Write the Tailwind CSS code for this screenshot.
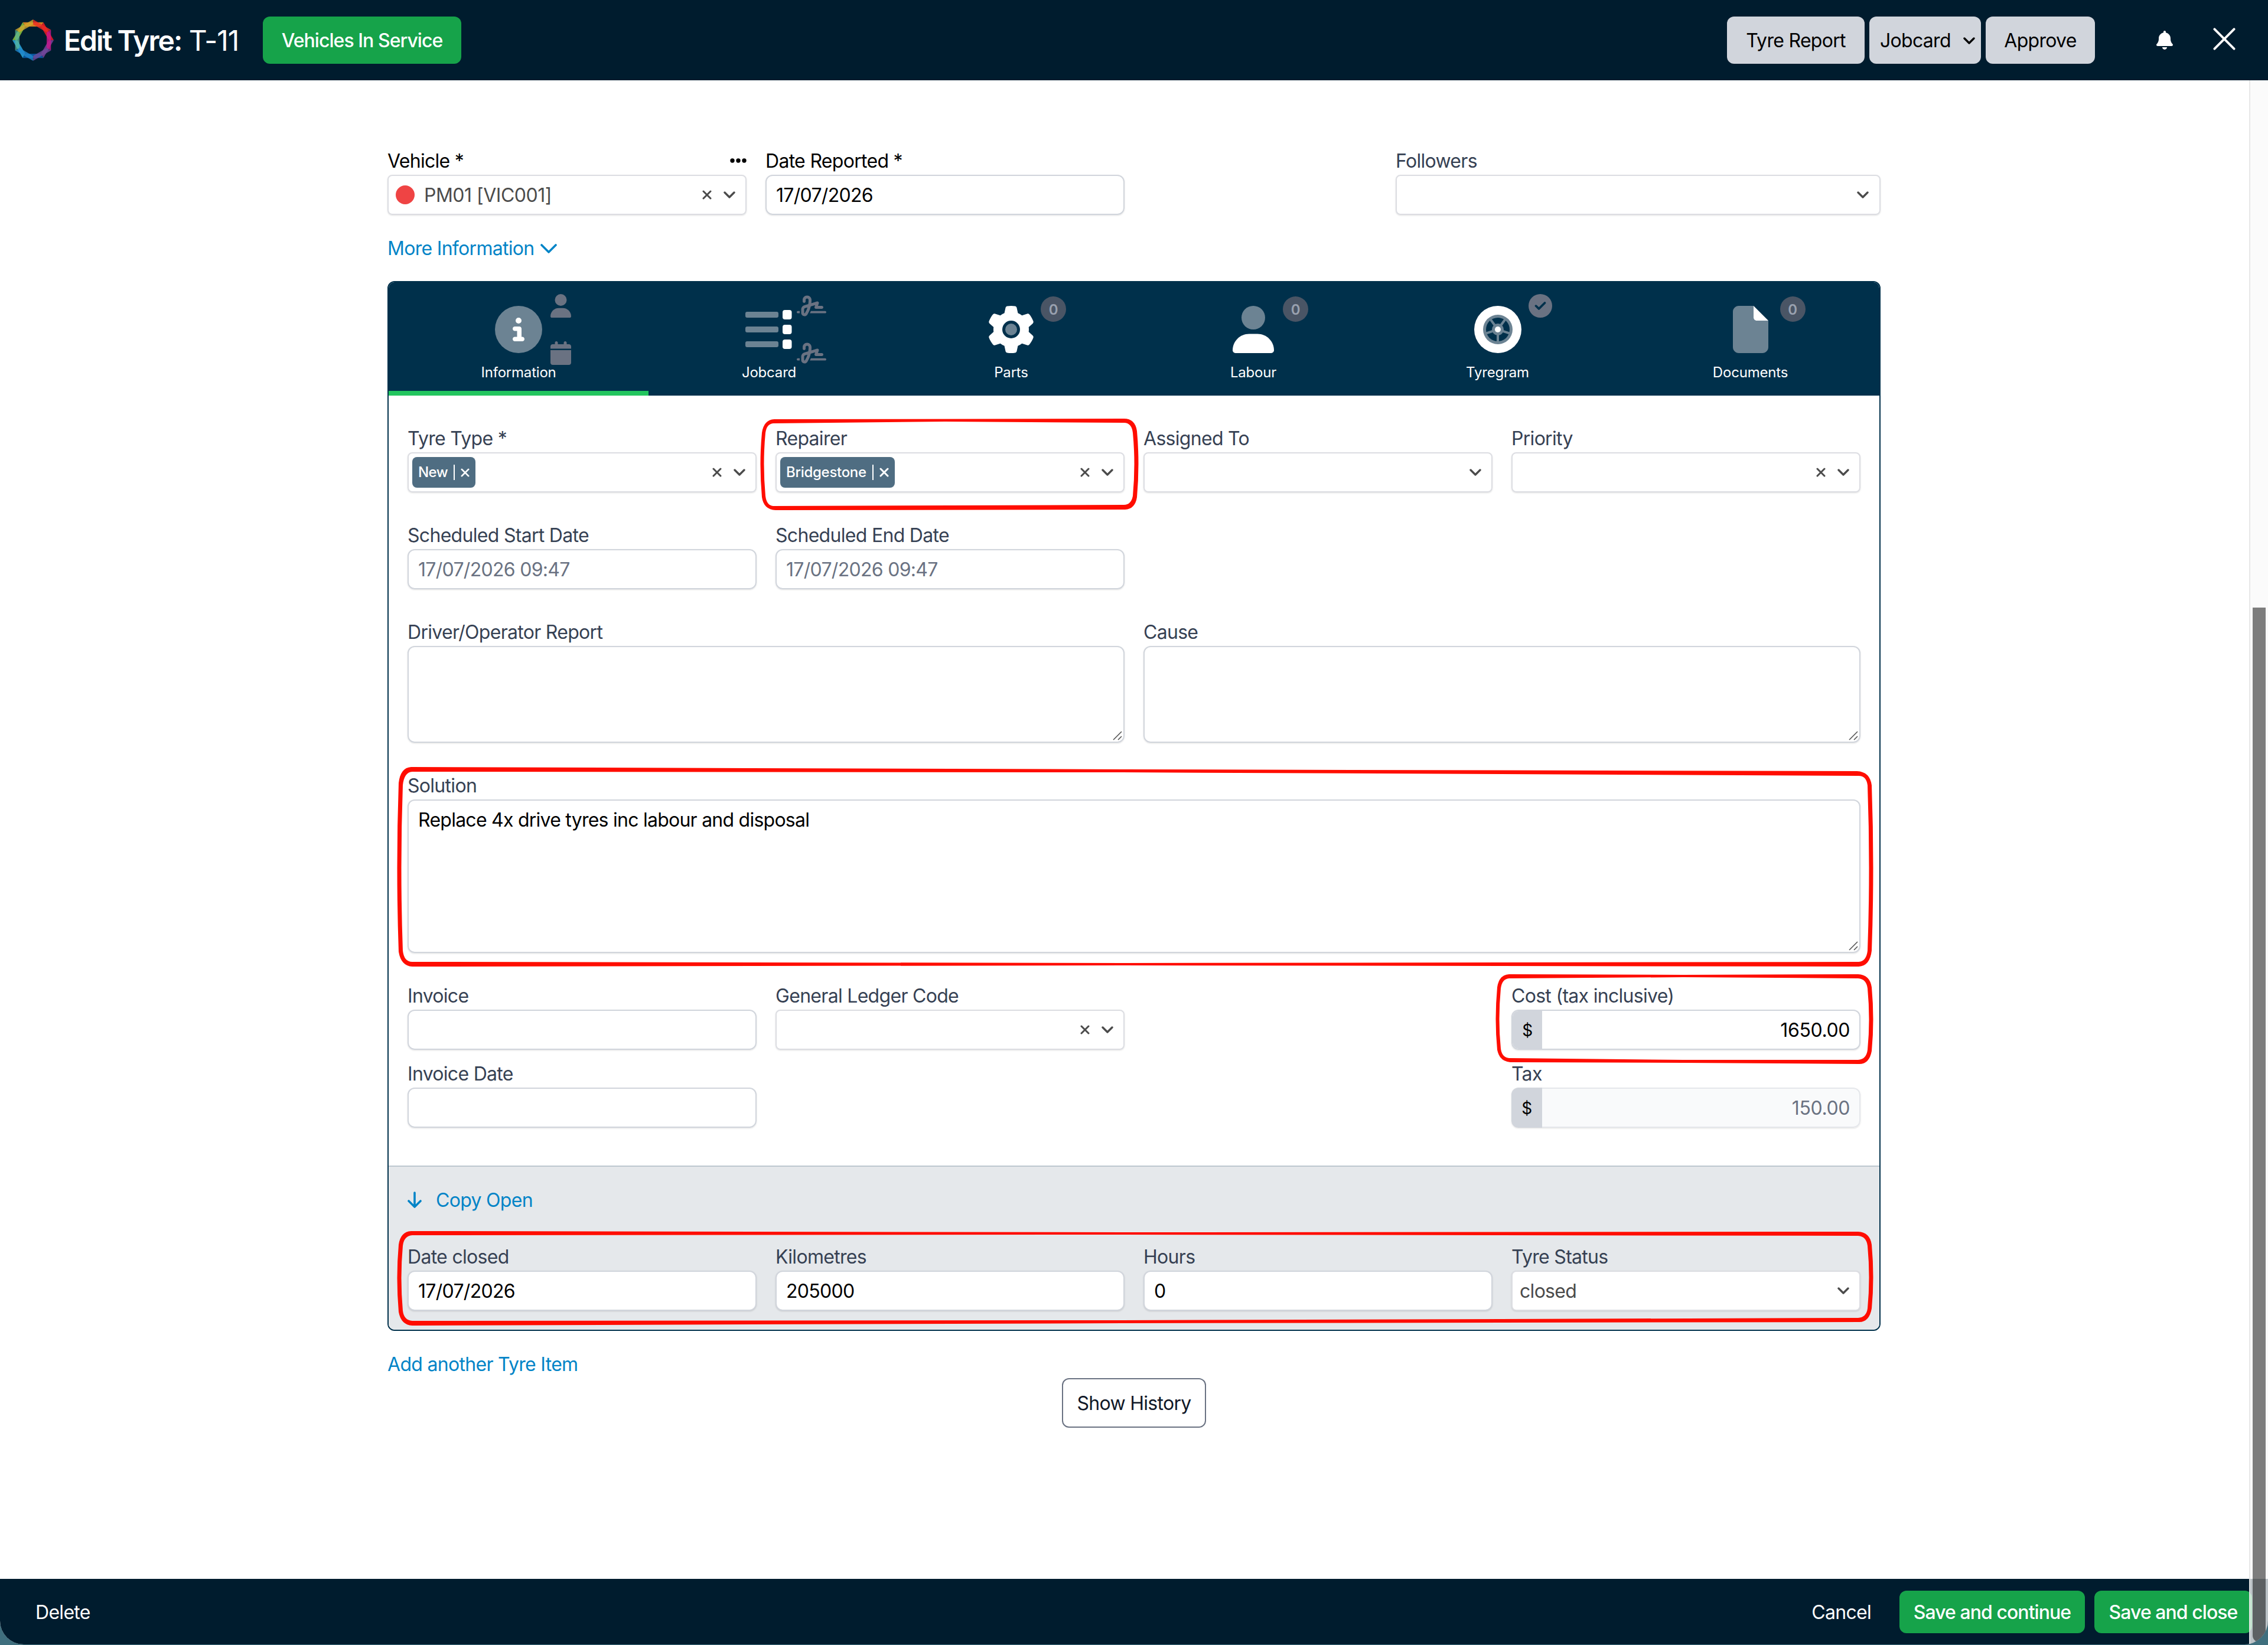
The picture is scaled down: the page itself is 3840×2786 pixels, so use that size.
<!DOCTYPE html>
<html lang="en">
<head>
    <meta charset="UTF-8">
    <meta name="viewport" content="width=device-width, initial-scale=1.0">
    <title>Edit Tyre: T-11</title>
    <script src="https://cdn.jsdelivr.net/npm/@tailwindcss/browser@4"></script>
</head>
<body class="bg-[#3f6f7e]">
    <!-- Shared icons -->
    <svg class="hidden">
        <symbol id="caret" viewBox="0 0 20 12"><path d="M2 2l8 8 8-8" fill="none" stroke="currentColor" stroke-width="3.4" stroke-linecap="round" stroke-linejoin="round"/></symbol>
        <symbol id="cross" viewBox="0 0 16 16"><path d="M2 2l12 12M14 2L2 14" fill="none" stroke="currentColor" stroke-width="3" stroke-linecap="round"/></symbol>
        <symbol id="grip" viewBox="0 0 16 16"><path d="M1 15L15 1M9 15l6-6" fill="none" stroke="#555" stroke-width="1.6"/></symbol>
        <symbol id="user" viewBox="0 0 448 512"><path d="M224 256A128 128 0 1 0 224 0a128 128 0 1 0 0 256z"/><path d="M178.3 304C79.8 304 0 383.8 0 482.3C0 498.7 13.3 512 29.7 512H418.3c16.4 0 29.7-13.3 29.7-29.7C448 383.8 368.2 304 269.7 304H178.3z"/></symbol>
        <symbol id="sign" viewBox="0 0 640 512"><path d="M192 128c0-17.7 14.3-32 32-32s32 14.3 32 32v7.8c0 27.7-2.4 55.3-7.1 82.5l-84.4 25.3c-40.6 12.2-68.4 49.6-68.4 92v71.9c0 40 32.5 72.5 72.5 72.5c26 0 50-13.9 62.9-36.5l13.9-24.3c26.8-47 46.5-97.7 58.4-150.5l94.4-28.3-12.5 37.5c-3.3 9.8-1.6 20.5 4.4 28.8s15.7 13.3 26 13.3H544c17.7 0 32-14.3 32-32s-14.3-32-32-32H460.4l18-53.9c3.8-11.3 .9-23.8-7.4-32.4s-20.7-11.8-32.2-8.4L316.4 198.1c2.4-20.7 3.6-41.4 3.6-62.3V128c0-53-43-96-96-96s-96 43-96 96v32c0 17.7 14.3 32 32 32s32-14.3 32-32V128zm-9.2 177l49-14.7c-10.4 33.8-24.5 66.4-42.1 97.2l-13.9 24.3c-1.5 2.6-4.3 4.3-7.4 4.3c-4.7 0-8.5-3.8-8.5-8.5V335.6c0-14.1 9.3-26.6 22.8-30.7zM24 368c-13.3 0-24 10.7-24 24s10.7 24 24 24H64.3c-.2-2.8-.3-5.6-.3-8.5V368H24zm592 48c13.3 0 24-10.7 24-24s-10.7-24-24-24H305.9c-6.7 16.3-14.2 32.3-22.3 48H616z"/></symbol>
    </svg>

    <div class="relative flex h-[2785px] w-[3840px] flex-col overflow-hidden rounded-b-[40px] bg-white font-['Inter','Liberation_Sans',sans-serif] text-[32px] leading-[50px] tracking-[-0.7px] text-black">
        <header class="flex h-34 shrink-0 items-center bg-[#001c2e] pr-[55px] pl-5 text-white">
            <svg class="size-18" viewBox="-36 -36 72 72" fill-opacity=".85">
                <polygon points="-17.5,-30.3 17.5,-30.3 13,-23 -13,-23" fill="#f7941d"/>
                <polygon points="-17.5,-30.3 17.5,-30.3 13,-23 -13,-23" fill="#ed1c24" transform="rotate(60)"/>
                <polygon points="-17.5,-30.3 17.5,-30.3 13,-23 -13,-23" fill="#7a3f9a" transform="rotate(120)"/>
                <polygon points="-17.5,-30.3 17.5,-30.3 13,-23 -13,-23" fill="#0a5fae" transform="rotate(180)"/>
                <polygon points="-17.5,-30.3 17.5,-30.3 13,-23 -13,-23" fill="#29a8e0" transform="rotate(240)"/>
                <polygon points="-17.5,-30.3 17.5,-30.3 13,-23 -13,-23" fill="#8cc63f" transform="rotate(300)"/>
                <polygon points="-17.5,-30.3 17.5,-30.3 13,-23 -13,-23" fill="#ee2a24" fill-opacity=".8" transform="rotate(30)"/>
                <polygon points="-17.5,-30.3 17.5,-30.3 13,-23 -13,-23" fill="#c9168c" fill-opacity=".8" transform="rotate(90)"/>
                <polygon points="-17.5,-30.3 17.5,-30.3 13,-23 -13,-23" fill="#6f4a9c" fill-opacity=".8" transform="rotate(150)"/>
                <polygon points="-17.5,-30.3 17.5,-30.3 13,-23 -13,-23" fill="#1f86cc" fill-opacity=".8" transform="rotate(210)"/>
                <polygon points="-17.5,-30.3 17.5,-30.3 13,-23 -13,-23" fill="#5bb89a" fill-opacity=".7" transform="rotate(270)"/>
                <polygon points="-17.5,-30.3 17.5,-30.3 13,-23 -13,-23" fill="#d0a630" fill-opacity=".8" transform="rotate(330)"/>
            </svg>
            <h1 class="ml-4 w-[337px] pt-0.5 text-[48px] tracking-[-1px] whitespace-nowrap"><span class="font-semibold tracking-[-2px]">Edit Tyre:</span> T-11</h1>
            <button class="flex h-20 w-[336px] items-center justify-center rounded-xl bg-[#16a34a] pt-0.5 font-medium tracking-[-0.95px]">Vehicles In Service</button>
            <div class="ml-auto flex gap-2 text-black">
                <button class="h-20 w-[233px] rounded-xl bg-gray-300 pt-0.5">Tyre Report</button>
                <button class="flex h-20 w-[189px] items-center justify-between rounded-xl bg-gray-300 pt-0.5 pr-2.5 pl-4.5">Jobcard <svg class="h-3 w-5"><use href="#caret"/></svg></button>
                <button class="h-20 w-[185px] rounded-xl bg-gray-300 pt-0.5">Approve</button>
            </div>
            <svg class="ml-26 h-8 w-7" viewBox="0 0 448 512" fill="#fff"><path d="M224 0c-17.7 0-32 14.3-32 32V51.2C119 66 64 130.6 64 208v18.8c0 47-17.3 92.4-48.5 127.6l-7.4 8.3c-8.4 9.4-10.4 22.9-5.3 34.4S19.4 416 32 416H416c12.6 0 24-7.4 29.2-18.9s3.1-25-5.3-34.4l-7.4-8.3C401.3 319.2 384 273.9 384 226.8V208c0-77.4-55-142-128-156.8V32c0-17.7-14.3-32-32-32zm45.3 493.3c12-12 18.7-28.3 18.7-45.3H224 160c0 17 6.7 33.3 18.7 45.3s28.3 18.7 45.3 18.7s33.3-6.7 45.3-18.7z"/></svg>
            <svg class="mb-1 ml-17 size-[38px]" viewBox="0 0 39 39" fill="none" stroke="#fff" stroke-width="4" stroke-linecap="round"><path d="M2.5 2.5l34 34M36.5 2.5l-34 34"/></svg>
        </header>

        <main class="flex-1 px-[656px] pt-28">
            <div class="flex gap-8">
                <div class="w-[608px]">
                    <div class="flex h-12 items-center justify-between"><span class="pt-0.5">Vehicle *</span>
                        <svg class="h-2 w-7" viewBox="0 0 28 8"><circle cx="4" cy="4" r="3.7"/><circle cx="14" cy="4" r="3.7"/><circle cx="24" cy="4" r="3.7"/></svg>
                    </div>
                    <div class="flex h-17 items-center rounded-lg border-2 border-[#dcdde2] px-3 text-[#4b4b4b] shadow-sm">
                        <span class="mr-4 size-8 rounded-full bg-[#ef4444]"></span><span class="pt-0.5 tracking-[-0.5px]">PM01 [VIC001]</span>
                        <svg class="mr-5 ml-auto size-4"><use href="#cross"/></svg>
                        <svg class="mr-[5px] h-3 w-5"><use href="#caret"/></svg>
                    </div>
                </div>
                <div class="w-[608px]">
                    <div class="h-12">Date Reported *</div>
                    <div class="flex h-17 items-center rounded-xl border-2 border-gray-300 px-4 pt-0.5 shadow-sm">17/07/2026</div>
                </div>
                <div class="ml-auto w-[821px]">
                    <div class="h-12 text-gray-700">Followers</div>
                    <div class="flex h-17 items-center justify-end rounded-lg border-2 border-[#dcdde2] px-4.5 text-[#4b4b4b] shadow-sm"><svg class="h-3 w-5"><use href="#caret"/></svg></div>
                </div>
            </div>
            <a class="mt-[33px] mb-[31px] flex h-12 items-center gap-2.5 text-[#0284c7]">More Information <svg class="h-4 w-7" viewBox="0 0 28 16" fill="none" stroke="currentColor" stroke-width="3.6" stroke-linecap="round" stroke-linejoin="round"><path d="M2 2l12 12L26 2"/></svg></a>

            <section class="overflow-hidden rounded-xl border-2 border-[#00304b]">
                <nav class="flex h-48 bg-[#00304b] text-[24px] leading-[34px] tracking-[-0.2px] text-white">
                    <div class="flex w-[440px] flex-col items-center border-b-8 border-[#22c55e] pt-10">
                        <div class="relative h-24">
                            <svg class="size-20" viewBox="0 0 512 512"><circle cx="256" cy="256" r="256" fill="#6c8393"/><path fill="#fff" d="M216 336h24V272H216c-13.3 0-24-10.7-24-24s10.7-24 24-24h48c13.3 0 24 10.7 24 24v88h8c13.3 0 24 10.7 24 24s-10.7 24-24 24H216c-13.3 0-24-10.7-24-24s10.7-24 24-24zm40-208a32 32 0 1 1 0 64 32 32 0 1 1 0-64z"/></svg>
                            <svg class="absolute -top-5 left-[94px] h-10 w-[35px] fill-gray-500"><use href="#user"/></svg>
                            <svg class="absolute top-15 left-[94px] h-10 w-[35px] fill-gray-500" viewBox="0 0 448 512"><path d="M96 32V64H48C21.5 64 0 85.5 0 112v48H448V112c0-26.5-21.5-48-48-48H352V32c0-17.7-14.3-32-32-32s-32 14.3-32 32V64H160V32c0-17.7-14.3-32-32-32S96 14.3 96 32zM448 192H0V464c0 26.5 21.5 48 48 48H400c26.5 0 48-21.5 48-48V192z"/></svg>
                        </div>
                        Information
                    </div>
                    <div class="flex w-[408px] flex-col items-center pt-10">
                        <div class="relative h-24">
                            <svg class="size-20" viewBox="0 0 80 80"><path fill="#6c8393" d="M3 10h50a3 3 0 0 1 3 3v4a3 3 0 0 1-3 3H3a3 3 0 0 1-3-3v-4a3 3 0 0 1 3-3zm0 25h50a3 3 0 0 1 3 3v4a3 3 0 0 1-3 3H3a3 3 0 0 1-3-3v-4a3 3 0 0 1 3-3zm0 25h50a3 3 0 0 1 3 3v4a3 3 0 0 1-3 3H3a3 3 0 0 1-3-3v-4a3 3 0 0 1 3-3z"/><g fill="#fff"><rect x="63" y="7" width="15.5" height="16" rx="4"/><rect x="63" y="32" width="15.5" height="16" rx="4"/><rect x="63" y="57" width="15.5" height="16" rx="4"/></g></svg>
                            <svg class="absolute -top-5 left-[87px] h-10 w-[50px] fill-gray-500"><use href="#sign"/></svg>
                            <svg class="absolute top-15 left-[87px] h-10 w-[50px] fill-gray-500"><use href="#sign"/></svg>
                        </div>
                        Jobcard
                    </div>
                    <div class="flex w-[412px] flex-col items-center pt-10">
                        <div class="relative h-24">
                            <svg class="size-20" viewBox="0 0 512 512"><path fill="#fff" d="M495.9 166.6c3.2 8.7 .5 18.4-6.4 24.6l-43.3 39.4c1.1 8.3 1.7 16.8 1.7 25.4s-.6 17.1-1.7 25.4l43.3 39.4c6.9 6.2 9.6 15.9 6.4 24.6c-4.4 11.9-9.7 23.3-15.8 34.3l-4.7 8.1c-6.6 11-14 21.4-22.1 31.2c-5.9 7.2-15.7 9.6-24.5 6.8l-55.7-17.7c-13.4 10.3-28.2 18.9-44 25.4l-12.5 57.1c-2 9.1-9 16.3-18.2 17.8c-13.8 2.3-28 3.5-42.5 3.5s-28.7-1.2-42.5-3.5c-9.2-1.5-16.2-8.7-18.2-17.8l-12.5-57.1c-15.8-6.5-30.6-15.1-44-25.4L83.1 425.9c-8.8 2.8-18.6 .3-24.5-6.8c-8.1-9.8-15.5-20.2-22.1-31.2l-4.7-8.1c-6.1-11-11.4-22.4-15.8-34.3c-3.2-8.7-.5-18.4 6.4-24.6l43.3-39.4C64.6 273.1 64 264.6 64 256s.6-17.1 1.7-25.4L22.4 191.2c-6.9-6.2-9.6-15.9-6.4-24.6c4.4-11.9 9.7-23.3 15.8-34.3l4.7-8.1c6.6-11 14-21.4 22.1-31.2c5.9-7.2 15.7-9.6 24.5-6.8l55.7 17.7c13.4-10.3 28.2-18.9 44-25.4l12.5-57.1c2-9.1 9-16.3 18.2-17.8C227.3 1.2 241.5 0 256 0s28.7 1.2 42.5 3.5c9.2 1.5 16.2 8.7 18.2 17.8l12.5 57.1c15.8 6.5 30.6 15.1 44 25.4l55.7-17.7c8.8-2.8 18.6-.3 24.5 6.8c8.1 9.8 15.5 20.2 22.1 31.2l4.7 8.1c6.1 11 11.4 22.4 15.8 34.3z"/><circle cx="256" cy="256" r="96" fill="#00304b"/><circle cx="256" cy="256" r="64" fill="#6c8393"/></svg>
                            <span class="absolute -top-4 left-[90px] flex size-[43px] items-center justify-center rounded-full bg-gray-600 pt-0.5 font-semibold text-gray-400">0</span>
                        </div>
                        Parts
                    </div>
                    <div class="flex w-[408px] flex-col items-center pt-10">
                        <div class="relative h-24">
                            <svg class="h-20 w-[70px]" viewBox="0 0 448 512"><circle cx="224" cy="128" r="128" fill="#6c8393"/><path fill="#fff" d="M178.3 304C79.8 304 0 383.8 0 482.3C0 498.7 13.3 512 29.7 512H418.3c16.4 0 29.7-13.3 29.7-29.7C448 383.8 368.2 304 269.7 304H178.3z"/></svg>
                            <span class="absolute -top-4 left-[85px] flex size-[43px] items-center justify-center rounded-full bg-gray-600 pt-0.5 font-semibold text-gray-400">0</span>
                        </div>
                        Labour
                    </div>
                    <div class="flex w-[419px] flex-col items-center pt-10">
                        <div class="relative h-24">
                            <svg class="size-20" viewBox="-40 -40 80 80">
                                <circle r="40" fill="#fff"/><circle r="25" fill="#6c8393"/><circle r="20" fill="#00304b"/>
                                <g stroke="#6c8393" stroke-width="4"><path d="M0 0v22"/><path d="M0 0v22" transform="rotate(72)"/><path d="M0 0v22" transform="rotate(144)"/><path d="M0 0v22" transform="rotate(216)"/><path d="M0 0v22" transform="rotate(288)"/></g>
                                <circle r="10" fill="#6c8393"/><circle r="5" fill="#fff"/>
                            </svg>
                            <svg class="absolute -top-5 left-[92px] size-10 fill-gray-500" viewBox="0 0 512 512"><path d="M256 512A256 256 0 1 0 256 0a256 256 0 1 0 0 512zM369 209L241 337c-9.4 9.4-24.6 9.4-33.9 0l-64-64c-9.4-9.4-9.4-24.6 0-33.9s24.6-9.4 33.9 0l47 47L335 175c9.4-9.4 24.6-9.4 33.9 0s9.4 24.6 0 33.9z"/></svg>
                        </div>
                        Tyregram
                    </div>
                    <div class="flex w-[437px] flex-col items-center pt-10">
                        <div class="relative h-24">
                            <svg class="h-20 w-15" viewBox="0 0 384 512"><path fill="#6c8393" d="M0 64C0 28.7 28.7 0 64 0H224V128c0 17.7 14.3 32 32 32H384V448c0 35.3-28.7 64-64 64H64c-35.3 0-64-28.7-64-64V64z"/><path fill="#fff" d="M384 160H256c-17.7 0-32-14.3-32-32V0L384 160z"/></svg>
                            <span class="absolute -top-4 left-20 flex size-[43px] items-center justify-center rounded-full bg-gray-600 pt-0.5 font-semibold text-gray-400">0</span>
                        </div>
                        Documents
                    </div>
                </nav>

                <div class="grid grid-cols-4 gap-x-8 gap-y-12 px-8 pt-12 pb-16 text-gray-700">
                    <div>
                        <div class="h-12">Tyre Type *</div>
                        <div class="flex h-17 items-center rounded-lg border-2 border-[#dcdde2] pr-[17px] pl-1.5 text-[#4b4b4b] shadow-sm">
                            <span class="flex h-13 items-center rounded-lg bg-[#4f6d82] px-2.5 text-[24px] font-medium tracking-[-0.6px] text-white">New<i class="mr-2.5 ml-2.5 h-6.5 w-0.5 bg-white"></i><svg class="size-[15px]"><use href="#cross"/></svg></span>
                            <svg class="mr-5 ml-auto size-4"><use href="#cross"/></svg>
                            <svg class="h-3 w-5"><use href="#caret"/></svg>
                        </div>
                    </div>
                    <div>
                        <div class="h-12">Repairer</div>
                        <div class="flex h-17 items-center rounded-lg border-2 border-[#dcdde2] pr-[17px] pl-1.5 text-[#4b4b4b] shadow-sm">
                            <span class="flex h-13 items-center rounded-lg bg-[#4f6d82] px-2.5 text-[24px] font-medium tracking-[-0.3px] text-white">Bridgestone<i class="mr-2.5 ml-2.5 h-6.5 w-0.5 bg-white"></i><svg class="size-4"><use href="#cross"/></svg></span>
                            <svg class="mr-5 ml-auto size-4"><use href="#cross"/></svg>
                            <svg class="h-3 w-5"><use href="#caret"/></svg>
                        </div>
                    </div>
                    <div>
                        <div class="h-12">Assigned To</div>
                        <div class="flex h-17 items-center justify-end rounded-lg border-2 border-[#dcdde2] px-[17px] text-[#4b4b4b] shadow-sm"><svg class="h-3 w-5"><use href="#caret"/></svg></div>
                    </div>
                    <div>
                        <div class="h-12">Priority</div>
                        <div class="flex h-17 items-center justify-end gap-5 rounded-lg border-2 border-[#dcdde2] px-[17px] text-[#4b4b4b] shadow-sm"><svg class="size-4"><use href="#cross"/></svg><svg class="h-3 w-5"><use href="#caret"/></svg></div>
                    </div>

                    <div>
                        <div class="h-12">Scheduled Start Date</div>
                        <div class="flex h-17 items-center rounded-xl border-2 border-gray-300 px-4 pt-0.5 text-gray-500 shadow-sm">17/07/2026 09:47</div>
                    </div>
                    <div class="col-span-3 w-[591px]">
                        <div class="h-12">Scheduled End Date</div>
                        <div class="flex h-17 items-center rounded-xl border-2 border-gray-300 px-4 pt-0.5 text-gray-500 shadow-sm">17/07/2026 09:47</div>
                    </div>

                    <div class="col-span-2">
                        <div class="h-12">Driver/Operator Report</div>
                        <div class="relative h-41 rounded-xl border-2 border-gray-300 shadow-sm"><svg class="absolute right-0.5 bottom-0.5 size-4"><use href="#grip"/></svg></div>
                    </div>
                    <div class="col-span-2">
                        <div class="h-12">Cause</div>
                        <div class="relative h-41 rounded-xl border-2 border-gray-300 shadow-sm"><svg class="absolute right-0.5 bottom-0.5 size-4"><use href="#grip"/></svg></div>
                    </div>

                    <div class="col-span-4">
                        <div class="h-12">Solution</div>
                        <div class="relative h-65 rounded-xl border-2 border-gray-300 px-4 py-2 tracking-[-0.75px] text-black shadow-sm">Replace 4x drive tyres inc labour and disposal<svg class="absolute right-0.5 bottom-0.5 size-4"><use href="#grip"/></svg></div>
                    </div>

                    <div>
                        <div class="h-12">Invoice</div>
                        <div class="h-17 rounded-xl border-2 border-gray-300 shadow-sm"></div>
                        <div class="mt-4 h-12">Invoice Date</div>
                        <div class="h-17 rounded-xl border-2 border-gray-300 shadow-sm"></div>
                    </div>
                    <div>
                        <div class="h-12">General Ledger Code</div>
                        <div class="flex h-17 items-center justify-end gap-5 rounded-lg border-2 border-[#dcdde2] px-[17px] text-[#4b4b4b] shadow-sm"><svg class="size-4"><use href="#cross"/></svg><svg class="h-3 w-5"><use href="#caret"/></svg></div>
                    </div>
                    <div class="col-start-4">
                        <div class="h-12">Cost (tax inclusive)</div>
                        <div class="flex h-17 overflow-hidden rounded-xl border-2 border-gray-300 text-black shadow-sm">
                            <span class="flex w-[50px] items-center justify-center bg-gray-300 pt-0.5 text-[28px]">$</span>
                            <span class="flex flex-1 items-center justify-end pt-0.5 pr-4 tracking-[-0.4px]">1650.00</span>
                        </div>
                        <div class="mt-4 h-12">Tax</div>
                        <div class="flex h-17 overflow-hidden rounded-xl shadow-sm">
                            <span class="flex w-13 items-center justify-center bg-gray-300 pt-0.5 text-[28px] text-black">$</span>
                            <span class="flex flex-1 items-center justify-end rounded-r-xl border-2 border-l-0 border-gray-200 bg-gray-50 pt-0.5 pr-4 tracking-[-0.4px] text-gray-500">150.00</span>
                        </div>
                    </div>
                </div>

                <div class="border-t-2 border-[#bcc7cf] bg-[#e5e8eb] px-8 pt-8 pb-8 text-gray-700">
                    <a class="mb-12 flex h-12 items-center text-[#0284c7]"><svg class="mr-6 h-7 w-6" viewBox="0 0 24 28" fill="none" stroke="currentColor" stroke-width="3.6" stroke-linecap="round" stroke-linejoin="round"><path d="M12 2v24M2 16l10 10 10-10"/></svg><span class="pt-0.5">Copy Open</span></a>
                    <div class="grid grid-cols-4 gap-8">
                        <div>
                            <div class="h-12">Date closed</div>
                            <div class="flex h-17 items-center rounded-xl border-2 border-gray-300 bg-white px-4 pt-0.5 text-black shadow-sm">17/07/2026</div>
                        </div>
                        <div>
                            <div class="h-12">Kilometres</div>
                            <div class="flex h-17 items-center rounded-xl border-2 border-gray-300 bg-white px-4 pt-0.5 text-black shadow-sm">205000</div>
                        </div>
                        <div>
                            <div class="h-12">Hours</div>
                            <div class="flex h-17 items-center rounded-xl border-2 border-gray-300 bg-white px-4 pt-0.5 text-black shadow-sm">0</div>
                        </div>
                        <div>
                            <div class="h-12">Tyre Status</div>
                            <div class="flex h-17 items-center justify-between rounded-lg border-2 border-[#dcdde2] bg-white pr-[17px] pl-3 text-[#4b4b4b] shadow-sm"><span class="pt-0.5">closed</span><svg class="h-3 w-5"><use href="#caret"/></svg></div>
                        </div>
                    </div>
                </div>
            </section>

            <a class="mt-8 block h-12 text-[#0284c7]">Add another Tyre Item</a>
            <button class="mx-auto block h-[84px] w-[244px] rounded-xl border-2 border-gray-500 pt-0.5 text-gray-900">Show History</button>
        </main>

        <footer class="flex h-[111px] shrink-0 items-center bg-[#001c2e] pr-[27px] pl-15 text-white">
            <span class="mr-auto pt-0.5">Delete</span>
            <span class="mr-12 pt-0.5">Cancel</span>
            <button class="mr-4 h-18 w-[314px] rounded-xl bg-[#16a34a] pt-0.5 font-medium tracking-[-0.95px]">Save and continue</button>
            <button class="h-18 w-[267px] rounded-xl bg-[#16a34a] pt-0.5 font-medium tracking-[-0.95px]">Save and close</button>
        </footer>

        <!-- Page scrollbar -->
        <div class="absolute top-34 right-0 bottom-0 w-8 border-l-2 border-[#e4e4e4]/80 bg-[#fafafa]/75">
            <div class="absolute top-[893px] right-1 bottom-1 w-[22px] rounded-b-2xl bg-black/50"></div>
        </div>

        <!-- Highlight outlines drawn by hand over the fields -->
        <svg class="absolute inset-0 h-[2785px] w-[3840px]" viewBox="0 0 3840 2785" fill="#ff0d00" fill-rule="evenodd">
            <path d="M1311 710L1903 709Q1922 709 1925 730Q1930 785 1925 842Q1922 862 1905 863L1313 864Q1293 863 1290 842Q1285 785 1290 733Q1293 711 1311 710ZM1309 717Q1298 718 1296 733Q1291 785 1296 840Q1298 856 1309 857L1903 855Q1915 855 1918 840Q1923 785 1918 733Q1916 716 1903 716L1600 714Z"/>
            <path d="M696 1299L1900 1303L3144 1306Q3166 1307 3169 1330Q3174 1470 3169 1610Q3166 1636 3147 1637L1900 1635L698 1637Q679 1636 675 1612Q670 1470 675 1326Q678 1300 696 1299ZM698 1307Q684 1308 682 1330Q677 1470 682 1610Q684 1629 698 1629L1900 1631L3147 1629Q3160 1628 3162 1610Q3167 1470 3162 1330Q3160 1314 3147 1314L1900 1308Z"/>
            <path d="M2555 1650L2850 1651L3146 1650Q3166 1651 3169 1672Q3174 1727 3169 1780Q3165 1802 3148 1802L2850 1800L2557 1799Q2539 1798 2535 1778Q2530 1727 2535 1672Q2538 1651 2555 1650ZM2555 1657Q2543 1658 2541 1674Q2536 1727 2541 1776Q2543 1791 2555 1792L2850 1795L3146 1795Q3160 1794 3162 1778Q3167 1727 3162 1674Q3160 1658 3146 1657L2850 1655Z"/>
            <path d="M696 2085L1900 2087L3146 2086Q3166 2087 3169 2108Q3174 2164 3169 2216Q3165 2239 3148 2239L1900 2241L698 2245Q679 2244 675 2222Q670 2164 675 2108Q678 2086 696 2085ZM698 2092Q684 2093 682 2110Q677 2164 682 2220Q684 2236 698 2237L1900 2236L3146 2232Q3160 2231 3162 2216Q3167 2164 3162 2110Q3160 2094 3146 2093L1900 2091Z"/>
        </svg>
    </div>
</body>
</html>
